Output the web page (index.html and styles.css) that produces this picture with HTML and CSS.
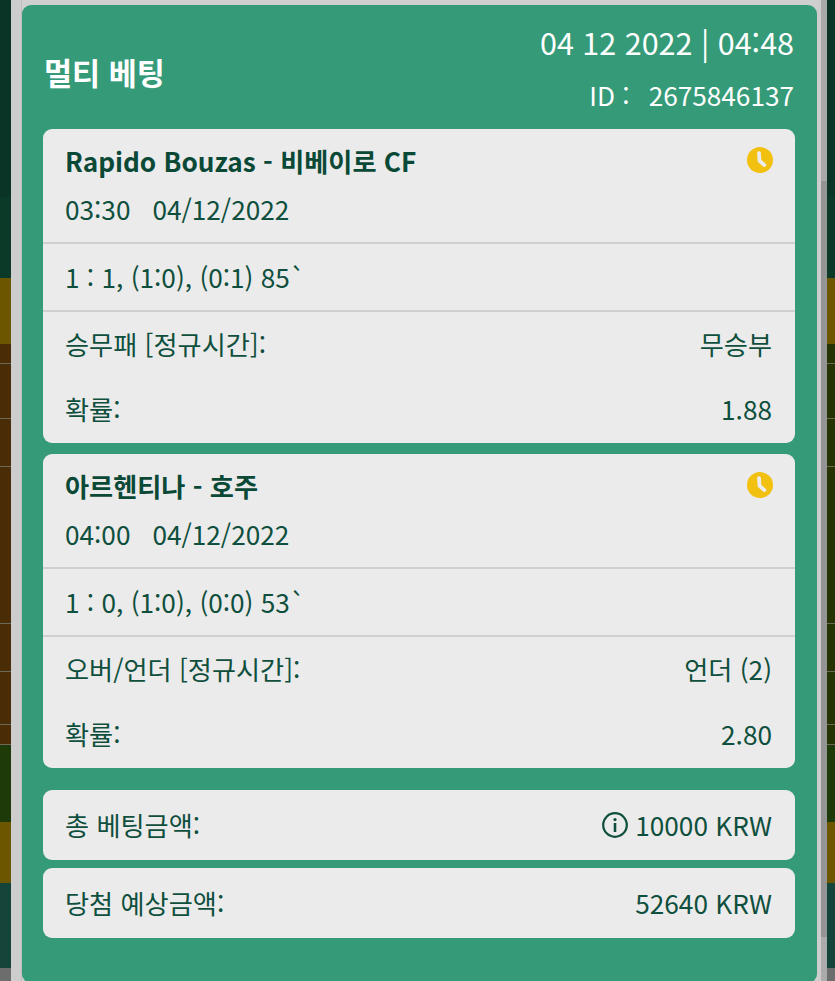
FILE: index.html
```html
<!DOCTYPE html>
<html lang="ko">
<head>
<meta charset="utf-8">
<title>멀티 베팅</title>
<link rel="stylesheet" href="styles.css">
</head>
<body>
<div class="backdrop">
  <div class="side side-left">
    <div class="band b1"></div><div class="band b2"></div><div class="band b3"></div><div class="band b4 brown"></div><div class="band b5"></div><div class="band b6"></div><div class="band b7"></div><div class="band b8"></div>
  </div>
  <div class="gutter-left"></div>
  <div class="gutter-right"></div>
  <div class="side side-right">
    <div class="band b1"></div><div class="band b2"></div><div class="band b3"></div><div class="band b4 moss"></div><div class="band b5"></div><div class="band b6"></div><div class="band b7"></div><div class="band b8"></div>
  </div>
</div>
<main class="panel">
  <header class="head">
    <h1 class="title">멀티 베팅</h1>
    <div class="meta">
      <div class="date">04 12 2022 | 04:48</div>
      <div class="id"><span class="id-label">ID :</span>2675846137</div>
    </div>
  </header>
  <section class="card">
    <div class="match">
      <div class="match-top">
        <h2 class="teams">Rapido Bouzas - 비베이로 CF</h2>
        <svg class="clock" viewBox="0 0 26 26" aria-hidden="true"><circle cx="13" cy="13" r="13" fill="#f2c00e"/><path d="M12 6.2l.5 7.6 4.8 4.2" fill="none" stroke="#ececec" stroke-width="3.8" stroke-linecap="round" stroke-linejoin="round"/></svg>
      </div>
      <div class="when">03:30 &nbsp; 04/12/2022</div>
    </div>
    <div class="score">1 : 1, (1:0), (0:1) 85`</div>
    <div class="detail">
      <div class="row"><span>승무패 [정규시간]:</span><span>무승부</span></div>
      <div class="row"><span>확률:</span><span>1.88</span></div>
    </div>
  </section>
  <section class="card">
    <div class="match">
      <div class="match-top">
        <h2 class="teams">아르헨티나 - 호주</h2>
        <svg class="clock" viewBox="0 0 26 26" aria-hidden="true"><circle cx="13" cy="13" r="13" fill="#f2c00e"/><path d="M12 6.2l.5 7.6 4.8 4.2" fill="none" stroke="#ececec" stroke-width="3.8" stroke-linecap="round" stroke-linejoin="round"/></svg>
      </div>
      <div class="when">04:00 &nbsp; 04/12/2022</div>
    </div>
    <div class="score">1 : 0, (1:0), (0:0) 53`</div>
    <div class="detail">
      <div class="row"><span>오버/언더 [정규시간]:</span><span>언더 (2)</span></div>
      <div class="row"><span>확률:</span><span>2.80</span></div>
    </div>
  </section>
  <section class="total first">
    <span>총 베팅금액:</span>
    <span class="amount"><svg class="info" viewBox="0 0 26 26" aria-hidden="true"><circle cx="13" cy="13" r="11.8" fill="none" stroke="#0f4f3d" stroke-width="2.2"/><circle cx="13" cy="7.6" r="1.6" fill="#0f4f3d"/><path d="M13 11v9" stroke="#0f4f3d" stroke-width="2.6"/></svg>10000 KRW</span>
  </section>
  <section class="total">
    <span>당첨 예상금액:</span>
    <span class="amount">52640 KRW</span>
  </section>
</main>
</body>
</html>
```
FILE: styles.css
```css
* { box-sizing: border-box; }
html, body { margin: 0; height: 981px; overflow: hidden; }
body {
  background: #cfcfcf;
  font-family: "Noto Sans CJK KR", "Noto Sans", sans-serif;
  color: #0f4f3d;
  position: relative;
}
.backdrop { position: absolute; inset: 0; }
.side { position: absolute; top: 0; bottom: 0; display: flex; flex-direction: column; }
.side-left { left: 0; width: 11px; }
.side-right { right: 0; width: 8px; }
.gutter-left { position: absolute; left: 11px; top: 0; bottom: 0; width: 11px; background: linear-gradient(90deg, #cdcdcd 0 10px, #bdbdbd 10px); }
.gutter-right {
  position: absolute;
  left: 817px;
  top: 0;
  bottom: 0;
  width: 10px;
  background:
    linear-gradient(90deg, #cdcdcd 0 4px, transparent 4px),
    linear-gradient(#a9a9a9 0 181px, #959595 181px 937px, #ababab 937px);
}
.band { flex: none; }
.b1 { height: 197px; background: #0a3526; }
.b2 { height: 81px; background: #0c3a29; }
.b3 { height: 66px; background: #6c5600; }
.b4 {
  height: 401px;
  background-image:
    linear-gradient(#6f6a58, #6f6a58),
    linear-gradient(#6f6a58, #6f6a58),
    linear-gradient(#6f6a58, #6f6a58),
    linear-gradient(#6f6a58, #6f6a58),
    linear-gradient(#6f6a58, #6f6a58),
    linear-gradient(#6f6a58, #6f6a58),
    linear-gradient(#6f6a58, #6f6a58);
  background-repeat: no-repeat;
  background-size: 100% 1px;
  background-position: 0 19px, 0 74px, 0 122px, 0 279px, 0 327px, 0 380px, 0 400px;
}
.brown { background-color: #4a2c06; }
.moss { background-color: #263404; }
.b5 { height: 77px; background: #1e3a08; }
.b6 { height: 61px; background: #6c5600; }
.b7 { height: 85px; background: #14443a; }
.b8 { height: 13px; background: #6d6d6d; }

.panel {
  position: absolute;
  left: 22px;
  top: 5px;
  width: 795px;
  height: 978px;
  padding: 0 22px 0 21px;
  background: #359a78;
  border-radius: 9px;
}
.head { height: 124px; display: flex; justify-content: space-between; align-items: flex-start; color: #fff; }
.title { margin: 47px 0 0 1px; font-size: 30.5px; line-height: 40px; font-weight: 700; }
.meta { text-align: right; margin-right: 1px; }
.date { margin-top: 15px; font-size: 30.5px; line-height: 44px; }
.id { margin-top: 12px; font-size: 26.2px; line-height: 38px; }
.id-label { margin-right: 19px; }
.card {
  background: #ebebeb;
  border-radius: 9px;
  height: 314px;
  margin-bottom: 11px;
  font-size: 26.2px;
}
.match { height: 115px; padding: 12px 23px 0 22px; border-bottom: 2px solid #cfcfcf; }
.match-top { display: flex; justify-content: space-between; align-items: flex-start; height: 40px; }
.teams { margin: 0; font-size: 26.2px; line-height: 40px; font-weight: 700; color: #0b4937; }
.clock { width: 26px; height: 26px; margin: 6px -1px 0 0; }
.when { margin-top: 8px; line-height: 40px; }
.score { height: 68px; padding: 13px 22px 0; line-height: 40px; border-bottom: 2px solid #cfcfcf; }
.detail { padding: 12px 23px 0 22px; display: flex; flex-direction: column; gap: 25px; }
.row { display: flex; justify-content: space-between; line-height: 40px; }
.total {
  height: 70px;
  margin-bottom: 8px;
  padding: 15px 23px 0 22px;
  background: #ebebeb;
  border-radius: 9px;
  display: flex;
  justify-content: space-between;
  font-size: 26.2px;
  line-height: 40px;
}
.first { margin-top: 22px; }
.amount { display: flex; align-items: center; height: 40px; }
.info { width: 26px; height: 26px; margin-right: 7px; }
```
